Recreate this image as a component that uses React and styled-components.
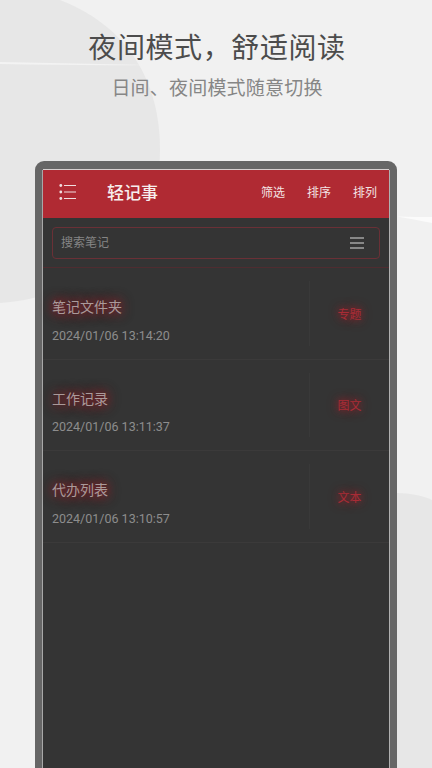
import React from 'react';
import styled, { createGlobalStyle } from 'styled-components';

const Global = createGlobalStyle`
  html, body { margin: 0; padding: 0; height: 100%; overflow: hidden; }
  body { background: #f1f1f1; font-family: "Noto Sans CJK SC", "Noto Sans", sans-serif; }
`;
const Page = styled.div`
  position: relative; width: 432px; height: 768px; overflow: hidden; background: #f1f1f1;
  display: flex; flex-direction: column; align-items: center;
`;
const Backdrop = styled.svg`
  position: absolute; inset: 0; width: 432px; height: 768px;
`;
const Hero = styled.header`
  position: relative; width: 100%; height: 161px; padding: 26px 0 0 2px; box-sizing: border-box;
  display: flex; flex-direction: column; align-items: center;
`;
const Title = styled.h1`
  margin: 0; font-size: 28px; line-height: 40px; font-weight: 400; color: #4c4c4c; letter-spacing: 0.6px;
`;
const Subtitle = styled.p`
  margin: 1px 0 0; font-size: 19px; line-height: 40px; color: #868686; letter-spacing: 0.2px;
`;
const Frame = styled.section`
  position: relative; width: 362px; flex: 1; box-sizing: border-box; background: #666;
  border-radius: 9px 9px 0 0; padding: 9px 8px 0; display: flex;
`;
const Screen = styled.div`
  flex: 1; background: #343434; display: flex; flex-direction: column; min-width: 0;
  box-shadow: 0 -1px 0 #d5cfcf, -1px 0 0 #a8a8a8, 1px 0 0 #b0b0b0;
`;
const AppBar = styled.div`
  height: 48px; box-sizing: border-box; background: #b02a33; display: flex; align-items: center; flex: none;
  padding: 0 12px 4px 16px;
`;
const MenuIcon = styled.svg`
  width: 18px; height: 18px; flex: none; color: #f0dedf;
`;
const AppName = styled.div`
  margin-left: 30px; font-size: 17px; font-weight: 500; line-height: 24px; color: #f7eeee;
`;
const Actions = styled.nav`
  margin-left: auto; display: flex; gap: 22px;
`;
const Action = styled.span`
  font-size: 12px; font-weight: 400; line-height: 18px; color: #f3e3e3;
`;
const SearchArea = styled.div`
  height: 50px; flex: none; box-sizing: border-box; padding: 9px; border-bottom: 1px solid #4f2c30;
`;
const SearchBox = styled.div`
  height: 32px; box-sizing: border-box; border: 1px solid #6a3036; border-radius: 4px;
  display: flex; align-items: center; justify-content: space-between; padding: 0 14px 0 8px;
`;
const Placeholder = styled.span`
  font-size: 12px; line-height: 18px; padding-bottom: 2px; color: #858585;
`;
const LinesIcon = styled.svg`
  width: 16px; height: 12px; color: #a3a3a3;
`;
const Note = styled.article`
  height: 91.5px; box-sizing: border-box; flex: none; display: flex; border-bottom: 1px solid #3b3a3a;
`;
const NoteBody = styled.div`
  flex: 1; padding: 27.4px 0 0 9px; min-width: 0;
`;
const NoteName = styled.div`
  font-size: 14px; line-height: 22px; color: #aa9a9a;
  text-shadow: 0 0 9px #7c2028, 0 0 12px #7c2028, 0 0 14px #7c2028;
`;
const NoteDate = styled.div`
  margin-top: 9.6px; font-family: Roboto, sans-serif; font-size: 12.5px; line-height: 18px; color: #8d8d8d;
`;
const NoteKind = styled.div`
  width: 80px; box-sizing: border-box; flex: none; margin: 13px 0; border-left: 1px solid #393939;
  display: flex; align-items: center; justify-content: center;
  font-size: 12px; color: #a82c36; text-shadow: 0 0 7px #8e2029, 0 0 11px #8e2029;
`;

const notes = [
  { name: '笔记文件夹', date: '2024/01/06 13:14:20', kind: '专题' },
  { name: '工作记录', date: '2024/01/06 13:11:37', kind: '图文' },
  { name: '代办列表', date: '2024/01/06 13:10:57', kind: '文本' },
];

export default function App() {
  return (
    <Page>
      <Global />
      <Backdrop viewBox="0 0 432 768">
        <path d="M0 0H60C112 20 160 65 160 150C160 235 85 298 0 303Z" fill="#e7e7e7" />
        <path d="M397 493C410 493 424 496 432 500V768H397Z" fill="#e7e7e7" />
        <path d="M0 62C50 63 100 64 148 65C100 65.500 50 65 0 64Z" fill="#f3f3f3" />
        <path d="M397 216.500C410 217 422 217 432 217V223C420 220.500 408 218.500 397 216.500Z" fill="#fbfbfb" />
      </Backdrop>
      <Hero>
        <Title>夜间模式，舒适阅读</Title>
        <Subtitle>日间、夜间模式随意切换</Subtitle>
      </Hero>
      <Frame>
        <Screen>
          <AppBar>
            <MenuIcon viewBox="0 0 18 18" fill="none" stroke="currentColor" strokeWidth="1.1">
              <circle cx="1.8" cy="2.500" r="1.4" fill="currentColor" stroke="none" />
              <circle cx="1.8" cy="9" r="1.4" fill="currentColor" stroke="none" />
              <circle cx="1.8" cy="15.500" r="1.4" fill="currentColor" stroke="none" />
              <path d="M5 2.500H17M5 9H17M5 15.500H17" />
            </MenuIcon>
            <AppName>轻记事</AppName>
            <Actions>
              <Action>筛选</Action>
              <Action>排序</Action>
              <Action>排列</Action>
            </Actions>
          </AppBar>
          <SearchArea>
            <SearchBox>
              <Placeholder>搜索笔记</Placeholder>
              <LinesIcon viewBox="0 0 16 12" fill="none" stroke="currentColor" strokeWidth="1.3">
                <path d="M1 1H15M1 6H15M1 11H15" />
              </LinesIcon>
            </SearchBox>
          </SearchArea>
          {notes.map((n) => (
            <Note key={n.name}>
              <NoteBody>
                <NoteName>{n.name}</NoteName>
                <NoteDate>{n.date}</NoteDate>
              </NoteBody>
              <NoteKind>{n.kind}</NoteKind>
            </Note>
          ))}
        </Screen>
      </Frame>
    </Page>
  );
}
